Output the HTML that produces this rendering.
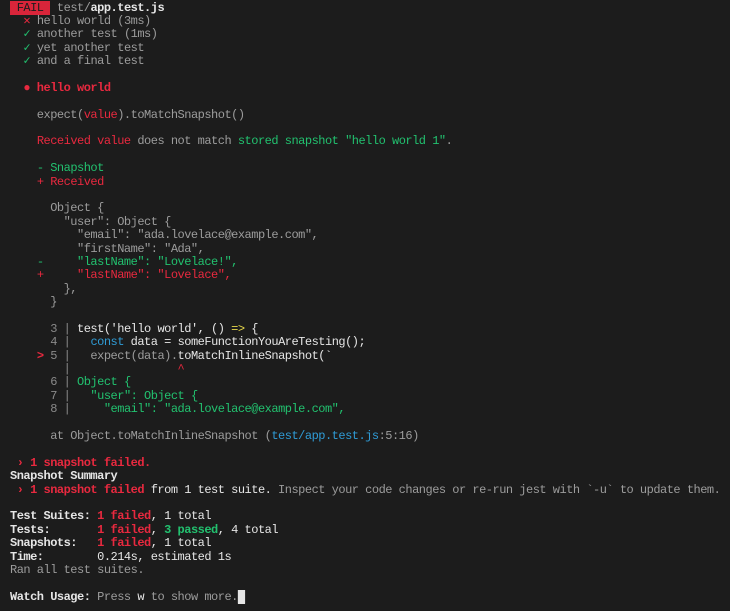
<!DOCTYPE html>
<html><head><meta charset="utf-8"><style>
html,body{margin:0;padding:0;background:#1c1c1c;width:730px;height:611px;overflow:hidden}
pre{margin:0;padding:1.5px 0 0 10px;font-family:"Liberation Mono",monospace;font-size:12px;letter-spacing:-0.5px;line-height:13.39px;color:#9c9c9c;white-space:pre}
.r{color:#e8293f}.g{color:#22c16f}.w{color:#e6e6e6}.b{font-weight:bold}.c{color:#2f9bd5}.y{color:#e7d84b}.d{color:#8a8a8a}
.badge{background:#d9253a;color:#1c1c1c}
.cur{background:#e6e6e6;color:#e6e6e6}
</style></head><body><pre><span class="badge"> FAIL </span> test/<span class="w b">app.test.js</span>
  <span class="r">✕</span> hello world (3ms)
  <span class="g">✓</span> another test (1ms)
  <span class="g">✓</span> yet another test
  <span class="g">✓</span> and a final test

  <span class="r b">● hello world</span>

    expect(<span class="r">value</span>).toMatchSnapshot()

    <span class="r">Received value</span> does not match <span class="g">stored snapshot "hello world 1"</span>.

    <span class="g">- Snapshot</span>
    <span class="r">+ Received</span>

      Object {
        "user": Object {
          "email": "ada.lovelace@example.com",
          "firstName": "Ada",
    <span class="g">-     "lastName": "Lovelace!",</span>
    <span class="r">+     "lastName": "Lovelace",</span>
        },
      }

      <span class="d">3 |</span> <span class="w">test('hello world', () <span class="y">=&gt;</span> {</span>
      <span class="d">4 |</span>   <span class="c">const</span> <span class="w">data = someFunctionYouAreTesting();</span>
    <span class="r b">&gt;</span> <span class="d">5 |</span>   expect(data).<span class="w">toMatchInlineSnapshot(`</span>
        <span class="d">|</span>                <span class="r">^</span>
      <span class="d">6 |</span> <span class="g">Object {</span>
      <span class="d">7 |</span> <span class="g">  "user": Object {</span>
      <span class="d">8 |</span> <span class="g">    "email": "ada.lovelace@example.com",</span>

      at Object.toMatchInlineSnapshot (<span class="c">test/app.test.js</span>:5:16)

<span class="r b"> › 1 snapshot failed.</span>
<span class="w b">Snapshot Summary</span>
<span class="r b"> › 1 snapshot failed</span><span class="w"> from 1 test suite.</span> Inspect your code changes or re-run jest with `-u` to update them.

<span class="w b">Test Suites: </span><span class="r b">1 failed</span><span class="w">, 1 total</span>
<span class="w b">Tests:       </span><span class="r b">1 failed</span><span class="w">, </span><span class="g b">3 passed</span><span class="w">, 4 total</span>
<span class="w b">Snapshots:   </span><span class="r b">1 failed</span><span class="w">, 1 total</span>
<span class="w b">Time:        </span><span class="w">0.214s, estimated 1s</span>
Ran all test suites.

<span class="w b">Watch Usage:</span> Press <span class="w">w</span> to show more.<span class="cur">█</span></pre></body></html>
